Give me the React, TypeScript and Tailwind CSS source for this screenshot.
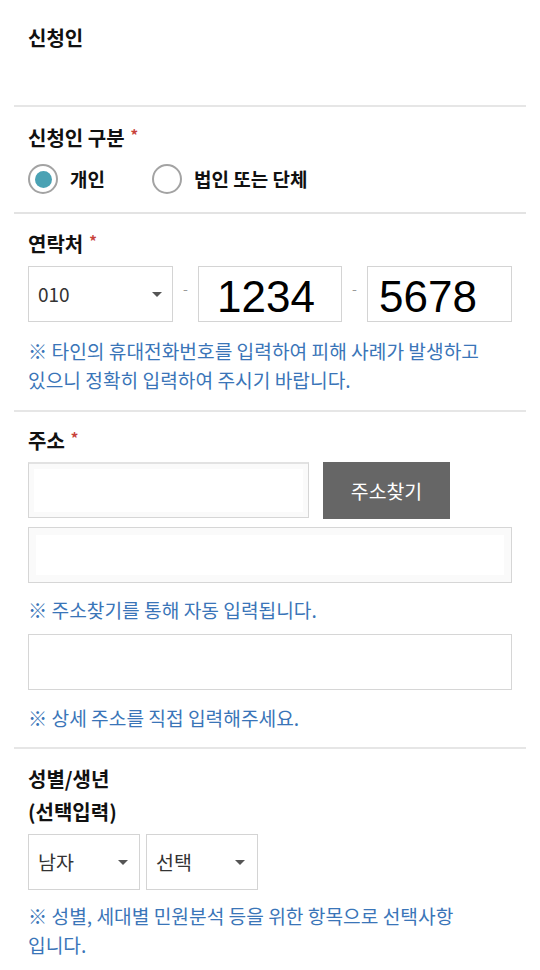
import React from "react";

const font = { fontFamily: '"Noto Sans CJK KR", "Noto Sans", sans-serif' };
const arial = { fontFamily: '"Liberation Sans", Arial, sans-serif' };

function Required() {
  return <span className="relative top-[4px] ml-[6px] align-top text-[15px] leading-[20px] text-[#c8423a]">*</span>;
}

function Caret() {
  return (
    <span className="h-0 w-0 border-l-[5px] border-r-[5px] border-t-[5px] border-l-transparent border-r-transparent border-t-[#555]" />
  );
}

function Radio({ checked, label }: { checked?: boolean; label: string }) {
  return (
    <div className="flex items-center gap-[12px]">
      <span className="flex h-[30px] w-[30px] items-center justify-center rounded-full border-2 border-[#a3a3a3] bg-white">
        {checked && <span className="h-[17px] w-[17px] rounded-full bg-[#4aa2b4]" />}
      </span>
      <span className="text-[19px] font-bold text-[#111]">{label}</span>
    </div>
  );
}

function Help({ children, className = "" }: { children: React.ReactNode; className?: string }) {
  return <p className={`text-[19.2px] leading-[29px] text-[#3a75b8] break-keep ${className}`}>{children}</p>;
}

function Dash() {
  return <span className="flex w-[25px] -translate-y-[6px] justify-center text-[14px] text-[#999]">-</span>;
}

export default function App() {
  return (
    <div className="min-h-[970px] w-[540px] bg-white px-[14px]" style={font}>
      {/* 신청인 */}
      <div className="h-[107px] border-b-2 border-[#e6e6e6] px-[14px] pt-[21px]">
        <h2 className="text-[20px] font-bold leading-[33px] text-[#111]">신청인</h2>
      </div>

      {/* 신청인 구분 */}
      <div className="border-b-2 border-[#e3e3e3] px-[14px] pt-[14px] pb-[18px]">
        <h3 className="text-[20px] font-bold leading-[33px] text-[#111]">
          신청인 구분<Required />
        </h3>
        <div className="mt-[10px] flex gap-[47px]">
          <Radio checked label="개인" />
          <Radio label="법인 또는 단체" />
        </div>
      </div>

      {/* 연락처 */}
      <div className="border-b-2 border-[#e6e6e6] px-[14px] pt-[13px] pb-[15px]">
        <h3 className="text-[20px] font-bold leading-[33px] text-[#111]">
          연락처<Required />
        </h3>
        <div className="mt-[6px] flex items-center">
          <div className="flex h-[56px] w-[145px] items-center justify-between border border-[#d4d4d4] pl-[9px] pr-[10px]">
            <span className="text-[19px] text-[#333]">010</span>
            <Caret />
          </div>
          <Dash />
          <div className="flex h-[56px] w-[144px] items-center border border-[#d4d4d4] pl-[18px] pt-[5px]">
            <span className="text-[44px] leading-none text-black" style={arial}>
              1234
            </span>
          </div>
          <Dash />
          <div className="flex h-[56px] w-[145px] items-center border border-[#d4d4d4] pl-[11px] pt-[5px]">
            <span className="text-[44px] leading-none text-black" style={arial}>
              5678
            </span>
          </div>
        </div>
        <Help className="mt-[15px]">
          ※ 타인의 휴대전화번호를 입력하여 피해 사례가 발생하고
          <br />
          있으니 정확히 입력하여 주시기 바랍니다.
        </Help>
      </div>

      {/* 주소 */}
      <div className="border-b-2 border-[#e6e6e6] px-[14px] pt-[12px] pb-[14px]">
        <h3 className="text-[20px] font-bold leading-[33px] text-[#111]">
          주소<Required />
        </h3>
        <div className="mt-[5px] flex gap-[14px]">
          <div className="h-[56px] w-[281px] border border-[#d6d6d6] border-t-2 border-t-[#e2e2e2] bg-white shadow-[inset_0_0_0_5px_#fafafa]" />
          <button className="flex h-[57px] w-[127px] items-center justify-center bg-[#666] text-[19.4px] text-white">
            주소찾기
          </button>
        </div>
        <div className="mt-[8px] h-[56px] w-[484px] border border-[#d6d6d6] bg-white shadow-[inset_0_0_0_7px_#fafafa]" />
        <Help className="mt-[13px]">※ 주소찾기를 통해 자동 입력됩니다.</Help>
        <div className="mt-[9px] h-[56px] w-[484px] border border-[#d6d6d6] bg-white" />
        <Help className="mt-[14px]">※ 상세 주소를 직접 입력해주세요.</Help>
      </div>

      {/* 성별/생년 */}
      <div className="px-[14px] pt-[13px] pb-[12px]">
        <h3 className="text-[20px] font-bold leading-[33px] text-[#111]">
          성별/생년
          <br />
          (선택입력)
        </h3>
        <div className="mt-[6px] flex gap-[6px]">
          <div className="flex h-[56px] w-[112px] items-center justify-between border border-[#d4d4d4] pl-[9px] pr-[11px]">
            <span className="text-[19.5px] text-[#333]">남자</span>
            <Caret />
          </div>
          <div className="flex h-[56px] w-[112px] items-center justify-between border border-[#d4d4d4] pl-[9px] pr-[12px]">
            <span className="text-[19.5px] text-[#333]">선택</span>
            <Caret />
          </div>
        </div>
        <Help className="mt-[12px]">
          ※ 성별, 세대별 민원분석 등을 위한 항목으로 선택사항
          <br />
          입니다.
        </Help>
      </div>
    </div>
  );
}
